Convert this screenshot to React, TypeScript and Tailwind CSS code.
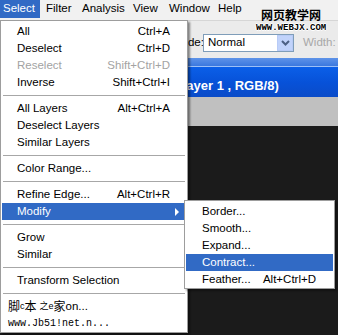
import React from "react";

type Item =
  | { sep: true }
  | { label: string; sc?: string; disabled?: boolean; active?: boolean; arrow?: boolean };

const items: Item[] = [
  { label: "All", sc: "Ctrl+A" },
  { label: "Deselect", sc: "Ctrl+D" },
  { label: "Reselect", sc: "Shift+Ctrl+D", disabled: true },
  { label: "Inverse", sc: "Shift+Ctrl+I" },
  { sep: true },
  { label: "All Layers", sc: "Alt+Ctrl+A" },
  { label: "Deselect Layers" },
  { label: "Similar Layers" },
  { sep: true },
  { label: "Color Range..." },
  { sep: true },
  { label: "Refine Edge...", sc: "Alt+Ctrl+R" },
  { label: "Modify", active: true, arrow: true },
  { sep: true },
  { label: "Grow" },
  { label: "Similar" },
  { sep: true },
  { label: "Transform Selection" },
  { sep: true },
];

const sub = [
  { label: "Border..." },
  { label: "Smooth..." },
  { label: "Expand..." },
  { label: "Contract...", active: true },
  { label: "Feather...", sc: "Alt+Ctrl+D" },
];

const font = { fontFamily: '"Liberation Sans", Arial, sans-serif' };

export default function App() {
  return (
    <div className="relative w-[338px] h-[335px] overflow-hidden flex flex-col bg-[#1b1b1b]" style={font}>
      {/* menubar */}
      <div className="h-[20px] shrink-0 bg-[#f1f1f1] flex items-start text-[11.5px] text-black">
        <div className="shrink-0 w-[40px] h-[18px] bg-[#316ac5] text-white pl-[3px] flex items-center">Select</div>
        <div className="shrink-0 ml-[6px] w-[36px] h-[18px] flex items-center">Filter</div>
        <div className="shrink-0 w-[51px] h-[18px] flex items-center">Analysis</div>
        <div className="shrink-0 w-[36px] h-[18px] flex items-center">View</div>
        <div className="shrink-0 w-[49px] h-[18px] flex items-center">Window</div>
        <div className="shrink-0 h-[18px] flex items-center">Help</div>
      </div>
      {/* options toolbar */}
      <div className="h-[38px] shrink-0 bg-[#ebebeb] border-t border-[#d6d6d6] flex items-start pt-[13px] text-[11.5px] whitespace-nowrap">
        <div className="shrink-0 ml-[172px] w-[31px] h-[17px] flex items-center text-black">Mode:</div>
        <div className="shrink-0 w-[91px] h-[18px] bg-white border border-[#7f9db9] flex items-stretch">
          <div className="flex-1 flex items-center pl-[4px] text-black">Normal</div>
          <div className="w-[16px] bg-[#c1d3fb] border border-[#b8cbf6] flex items-center justify-center">
            <svg width="9" height="6" viewBox="0 0 9 6">
              <path d="M1 1 L4.5 4.5 L8 1" stroke="#4d6185" strokeWidth="2" fill="none" />
            </svg>
          </div>
        </div>
        <div className="shrink-0 ml-[9px] h-[17px] flex items-center text-[#a8a8a8]">Width:</div>
        <div className="shrink-0 ml-[3px] w-[20px] h-[18px] bg-white border border-[#b8b8b8]" />
      </div>
      {/* title bar */}
      <div className="h-[8px] shrink-0 bg-gradient-to-b from-[#5e93e8] to-[#3b78df]" />
      <div className="h-px shrink-0 bg-[#9cc0f7]" />
      <div className="h-[30px] shrink-0 bg-gradient-to-b from-[#0b5fe8] via-[#0752d9] to-[#0a4bc8] flex items-end pb-[3px]">
        <div className="shrink-0 ml-[174px] whitespace-nowrap text-white font-bold text-[13px] leading-[16px]">
          (Layer 1 , RGB/8)
        </div>
      </div>
      <div className="h-[29px] shrink-0 bg-[#c0c0c0]" />
      <div className="flex-1 bg-[#1b1b1b]" />

      {/* watermark */}
      <div className="absolute left-[261px] top-[7px] text-[12px] font-bold text-black leading-[15px]" style={{ fontFamily: '"Noto Sans CJK SC", sans-serif' }}>
        网页教学网
      </div>
      <div
        className="absolute left-[256px] top-[23px] text-[9px] font-bold text-black leading-[10px]"
        style={{ fontFamily: '"Liberation Mono", monospace', textShadow: "1px 0 0 #fff, -1px 0 0 #fff, 0 1px 0 #fff, 0 -1px 0 #fff" }}
      >
        WWW.WEBJX.COM
      </div>

      {/* Select menu */}
      <div className="absolute left-0 top-[20px] w-[188px] bg-white border border-[#9d9d9d] pt-[2px] px-[1px] text-[11.5px] text-black shadow-[2px_2px_2px_rgba(0,0,0,0.45)]">
        {items.map((it, i) =>
          "sep" in it ? (
            <div key={i} className="h-[9px] flex items-center px-[1px]">
              <div className="h-px w-full bg-[#a7a7a7]" />
            </div>
          ) : (
            <div
              key={i}
              className={
                "h-[17px] flex items-center justify-between pl-[15px] pr-[16px] " +
                (it.active ? "bg-[#316ac5] text-white" : it.disabled ? "text-[#a3a3a3]" : "text-black")
              }
            >
              <span>{it.label}</span>
              {it.sc && <span>{it.sc}</span>}
              {it.arrow && (
                <svg width="5" height="8" viewBox="0 0 5 8" className="mr-[-10px]">
                  <path d="M0 0 L4 4 L0 8 Z" fill="#ffffff" />
                </svg>
              )}
            </div>
          )
        )}
        <div className="h-[17px] flex items-center pl-[6px] text-black" style={{ fontFamily: '"Liberation Sans", "Noto Sans CJK SC", sans-serif' }}>
          <span className="text-[12px]">脚</span>
          <span className="text-[9px]">c</span>
          <span className="text-[12px]">本</span>
          <span className="text-[9px] ml-[3px]">之</span>
          <span className="text-[9px]">e</span>
          <span className="text-[12px]">家</span>
          <span>on...</span>
        </div>
        <div className="h-[17px] flex items-center pl-[6px] text-black text-[10px]" style={{ fontFamily: '"Liberation Mono", monospace' }}>
          www.Jb51!net.n...
        </div>
      </div>

      {/* Modify submenu */}
      <div className="absolute left-[184px] top-[200px] w-[151px] bg-white border border-[#9d9d9d] pt-[2px] px-[1px] text-[11.5px] shadow-[2px_2px_2px_rgba(0,0,0,0.35)]">
        {sub.map((it, i) => (
          <div
            key={i}
            className={
              "h-[17px] flex items-center justify-between pl-[16px] pr-[17px] " +
              (it.active ? "bg-[#316ac5] text-white" : "text-black")
            }
          >
            <span>{it.label}</span>
            {it.sc && <span>{it.sc}</span>}
          </div>
        ))}
      </div>
    </div>
  );
}
